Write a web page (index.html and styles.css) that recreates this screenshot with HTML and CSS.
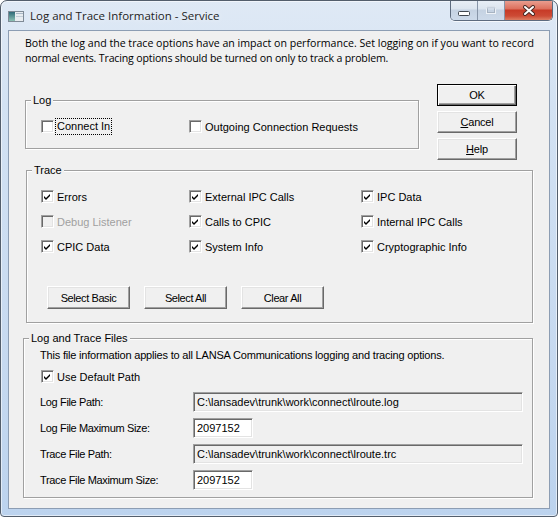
FILE: index.html
```html
<!DOCTYPE html>
<html>
<head>
<meta charset="utf-8">
<link rel="stylesheet" href="styles.css">
</head>
<body>
<div class="window">
  <div class="titlebar">
    <svg class="app-icon" width="16" height="16" viewBox="0 0 16 16">
      <defs>
        <linearGradient id="ig" x1="0" y1="0" x2="0" y2="1">
          <stop offset="0" stop-color="#2f6a78"/>
          <stop offset="1" stop-color="#8cc0b4"/>
        </linearGradient>
      </defs>
      <rect x="0.5" y="3.5" width="15" height="10" fill="#e8ecf0" stroke="#7f8a96"/>
      <rect x="1" y="4" width="6" height="9" fill="url(#ig)"/>
      <rect x="8" y="5" width="7" height="1" fill="#a9b8c6"/>
      <rect x="8" y="8" width="7" height="1" fill="#c3ced8"/>
    </svg>
    <span class="title">Log and Trace Information - Service</span>
    <div class="caption">
      <div class="cbtn min">
        <svg width="12" height="6" viewBox="0 0 12 6"><rect x="0.5" y="1.5" width="11" height="4" rx="1" fill="#fff" stroke="#40474f"/></svg>
      </div>
      <div class="cbtn max">
        <svg width="12" height="10" viewBox="0 0 12 10"><rect x="1.5" y="1.5" width="9" height="7" fill="none" stroke="#eef2f7" stroke-width="1"/><rect x="2.5" y="2.5" width="7" height="5" fill="none" stroke="#a7b3c2"/><rect x="1.5" y="1.5" width="9" height="2" fill="#c9d3df"/></svg>
      </div>
      <div class="cbtn close">
        <svg width="14" height="11" viewBox="0 0 14 11"><path d="M3 2 L11 9 M11 2 L3 9" stroke="#4a2a25" stroke-width="4" stroke-linecap="round"/><path d="M3 2 L11 9 M11 2 L3 9" stroke="#fff" stroke-width="2" stroke-linecap="round"/></svg>
      </div>
    </div>
  </div>
  <div class="client">
    <p class="intro"><span class="line1">Both the log and the trace options have an impact on performance. Set logging on if you want to record</span><br><span class="line2">normal events. Tracing options should be turned on only to track a problem.</span></p>

    <div class="top-row">
      <fieldset class="group log-group">
        <legend>Log</legend>
        <div class="log-grid">
          <label class="check"><span class="box"></span><span class="focus">Connect In</span></label>
          <label class="check"><span class="box"></span><span>Outgoing Connection Requests</span></label>
        </div>
      </fieldset>
      <div class="dialog-buttons">
        <div class="btn default">OK</div>
        <div class="btn"><u>C</u>ancel</div>
        <div class="btn"><u>H</u>elp</div>
      </div>
    </div>

    <fieldset class="group trace-group">
      <legend>Trace</legend>
      <div class="trace-grid">
        <label class="check"><span class="box checked"></span><span>Errors</span></label>
        <label class="check"><span class="box checked"></span><span>External IPC Calls</span></label>
        <label class="check"><span class="box checked"></span><span>IPC Data</span></label>
        <label class="check disabled"><span class="box"></span><span>Debug Listener</span></label>
        <label class="check"><span class="box checked"></span><span>Calls to CPIC</span></label>
        <label class="check"><span class="box checked"></span><span>Internal IPC Calls</span></label>
        <label class="check"><span class="box checked"></span><span>CPIC Data</span></label>
        <label class="check"><span class="box checked"></span><span>System Info</span></label>
        <label class="check"><span class="box checked"></span><span>Cryptographic Info</span></label>
      </div>
      <div class="trace-buttons">
        <div class="btn wide">Select Basic</div>
        <div class="btn wide">Select All</div>
        <div class="btn wide">Clear All</div>
      </div>
    </fieldset>

    <fieldset class="group files-group">
      <legend>Log and Trace Files</legend>
      <div class="files-body">
        <div class="files-note">This file information applies to all LANSA Communications logging and tracing options.</div>
        <label class="check default-path"><span class="box checked"></span><span>Use Default Path</span></label>
        <div class="field first">
          <span class="lbl">Log File Path:</span>
          <div class="tb path">C:\lansadev\trunk\work\connect\lroute.log</div>
        </div>
        <div class="field">
          <span class="lbl">Log File Maximum Size:</span>
          <div class="tb size">2097152</div>
        </div>
        <div class="field">
          <span class="lbl">Trace File Path:</span>
          <div class="tb path">C:\lansadev\trunk\work\connect\lroute.trc</div>
        </div>
        <div class="field">
          <span class="lbl">Trace File Maximum Size:</span>
          <div class="tb size">2097152</div>
        </div>
      </div>
    </fieldset>
  </div>
</div>
</body>
</html>
```
FILE: styles.css
```css
html, body {
  margin: 0;
  padding: 0;
  background: #ffffff;
}
body {
  font-family: "Liberation Sans", Arial, sans-serif;
  font-size: 11px;
  font-weight: normal;
  color: #000;
}
.window {
  width: 558px;
  height: 517px;
  box-sizing: border-box;
  border: 1px solid #535e6c;
  border-radius: 7px 7px 4px 4px;
  background: linear-gradient(to bottom, #dfe9f5 0%, #d3e2f3 20%, #c6d9f0 70%, #bcd3ee 100%);
  box-shadow: inset 0 0 0 1px rgba(255,255,255,0.55);
  display: flex;
  flex-direction: column;
  overflow: hidden;
}
.titlebar {
  height: 29px;
  flex: none;
  display: flex;
  align-items: center;
  padding-left: 7px;
}
.app-icon {
  flex: none;
  margin-right: 6px;
}
.title {
  font-family: "Open Sans", "Liberation Sans", sans-serif;
  font-size: 11.5px;
  color: #1e1e1e;
  text-shadow: 0 0 6px rgba(255,255,255,0.9);
}
.caption {
  margin-left: auto;
  margin-right: 4px;
  align-self: flex-start;
  margin-top: -1px;
  display: flex;
  height: 20px;
  border: 1px solid #5d6b7e;
  border-top: none;
  border-radius: 0 0 5px 5px;
  overflow: hidden;
  box-shadow: 0 1px 0 rgba(255,255,255,0.7);
}
.cbtn {
  display: flex;
  align-items: center;
  justify-content: center;
}
.cbtn.min, .cbtn.max {
  width: 26px;
  background: linear-gradient(to bottom, #e9eff6 0%, #dce5ef 45%, #c5d2e2 50%, #cddaea 100%);
  border-right: 1px solid #8795a8;
}
.cbtn.min svg { margin-top: 5px; }
.cbtn.close {
  width: 47px;
  background: linear-gradient(to bottom, #eba395 0%, #dc6f5c 45%, #c73a26 50%, #cd4b35 80%, #dc7d63 100%);
}
.client {
  flex: 1;
  margin: 0 7px 7px;
  border: 1px solid #8c9db3;
  background: #f0f0f0;
  min-height: 0;
}
.intro {
  margin: 5px 0 0 16px;
  font-family: "Open Sans", "Liberation Sans", sans-serif;
  font-size: 10.6px;
  line-height: 15px;
  white-space: nowrap;
  color: #000;
}
.intro .line2 { letter-spacing: -0.17px; }
.top-row {
  display: flex;
  align-items: flex-start;
  margin-top: 18px;
}
fieldset.group {
  margin: 0;
  padding: 0;
  min-width: 0;
  box-sizing: border-box;
  border: 1px solid #a0a0a0;
  box-shadow: inset 1px 1px 0 #fff, 1px 1px 0 #fff;
}
fieldset.group legend {
  margin-left: 5px;
  padding: 0 2px;
  line-height: 14px;
  font-weight: normal;
  background: #f0f0f0;
}
.log-group {
  margin: 9px 0 0 16px !important;
  width: 394px;
}
.log-grid {
  display: grid;
  grid-template-columns: 148px auto;
  padding: 12px 0 14px 15px;
}
.dialog-buttons {
  margin-left: 18px;
  display: flex;
  flex-direction: column;
  gap: 5px;
}
.btn {
  box-sizing: border-box;
  width: 80px;
  height: 22px;
  display: flex;
  align-items: center;
  justify-content: center;
  font-weight: normal;
  letter-spacing: -0.2px;
  background: #f0f0f0;
  border: 1px solid;
  border-color: #ffffff #696969 #696969 #ffffff;
  box-shadow: inset -1px -1px 0 #a0a0a0, inset 1px 1px 0 #e3e3e3;
}
.btn u { text-decoration: underline; text-underline-offset: 1px; }
.btn.default {
  border: 1px solid #000;
  box-shadow: inset 1px 1px 0 #fff, inset -1px -1px 0 #696969, inset -2px -2px 0 #a0a0a0;
}
.btn.wide {
  width: 83px;
  height: 23px;
  letter-spacing: -0.4px;
}
.check {
  display: flex;
  align-items: center;
  height: 15px;
  gap: 3px;
  white-space: nowrap;
}
.check.disabled { color: #a0a0a0; }
.box {
  flex: none;
  width: 13px;
  height: 13px;
  box-sizing: border-box;
  border: 1px solid;
  border-color: #a0a0a0 #ffffff #ffffff #a0a0a0;
  box-shadow: inset 1px 1px 0 #696969, inset -1px -1px 0 #e3e3e3;
  background: #fff;
}
.check.disabled .box { background: #f0f0f0; }
.box.checked {
  background: #fff url("data:image/svg+xml;utf8,<svg xmlns='http://www.w3.org/2000/svg' width='11' height='11' viewBox='0 0 11 11'><path d='M2 5 L4 7 L8 3 L8 5 L4 9 L2 7 Z' fill='black'/></svg>") no-repeat 0 0;
}
.focus {
  outline: 1px dotted #000;
  padding: 1px 1px;
  line-height: 13px;
  margin-left: -1px;
}
.trace-group {
  margin: 3px 0 0 17px !important;
  width: 507px;
}
.trace-grid {
  display: grid;
  grid-template-columns: 148px 172px auto;
  grid-auto-rows: 15px;
  row-gap: 10px;
  padding: 12px 0 0 14px;
}
.trace-buttons {
  display: flex;
  gap: 14px;
  padding: 32px 0 13px 20px;
}
.files-group {
  margin: 8px 0 0 14px !important;
  width: 510px;
}
.files-body {
  padding: 3px 0 7px 16px;
}
.files-note {
  line-height: 15px;
  white-space: nowrap;
  letter-spacing: -0.19px;
}
.default-path {
  margin: 6px 0 0 1px;
}
.field {
  display: grid;
  grid-template-columns: 153px auto;
  align-items: center;
  height: 20px;
  margin-top: 6px;
}
.field.first { margin-top: 8px; }
.lbl { letter-spacing: -0.35px; }
.tb {
  box-sizing: border-box;
  height: 20px;
  padding: 0 3px;
  line-height: 18px;
  border: 1px solid;
  border-color: #a0a0a0 #ffffff #ffffff #a0a0a0;
  box-shadow: inset 1px 1px 0 #696969, inset -1px -1px 0 #e3e3e3;
  white-space: nowrap;
}
.tb.path {
  width: 330px;
  background: #f0f0f0;
}
.tb.size {
  width: 60px;
  background: #fff;
}
```
